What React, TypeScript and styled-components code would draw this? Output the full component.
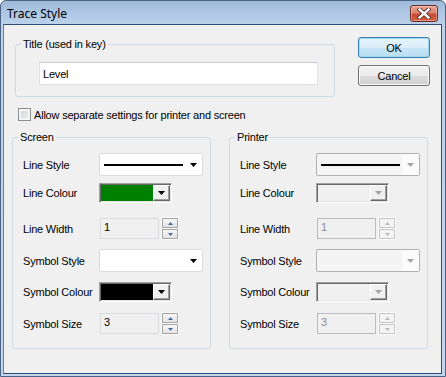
import React from 'react';
import styled, { createGlobalStyle } from 'styled-components';

const GlobalStyle = createGlobalStyle`
  html, body { margin: 0; padding: 0; }
  body {
    background: #ffffff;
    font-family: "Liberation Sans", Arial, sans-serif;
    font-size: 11px;
    color: #000;
  }
  *, *::before, *::after { box-sizing: border-box; }
`;

const Window = styled.div`
  width: 446px;
  height: 377px;
  display: flex;
  flex-direction: column;
  border: 1px solid #4a6387;
  border-radius: 6px 6px 0 0;
  padding: 0 3px 2px 2px;
  background: linear-gradient(180deg, #9fb9da 0px, #afc7e4 12px, #bcd2eb 24px, #c2d6ee 100%);
  overflow: hidden;
`;

const TitleBar = styled.div`
  height: 23px;
  flex: none;
  display: flex;
  align-items: flex-start;
  justify-content: space-between;
  padding: 0 4px 0 4px;
`;

const TitleText = styled.div`
  margin-top: 5px;
  line-height: 16px;
  font-family: "Noto Sans", "Open Sans", sans-serif;
  font-size: 12px;
  color: #000;
`;

const CloseButton = styled.div`
  margin-top: 4px;
  width: 28px;
  height: 17px;
  border: 1px solid #6a2a25;
  border-radius: 3px;
  background: linear-gradient(180deg, #e8a493 0%, #dc8672 45%, #c74a32 55%, #d0603f 100%);
  box-shadow: inset 0 0 0 1px rgba(255, 220, 210, 0.45);
  display: flex;
  align-items: center;
  justify-content: center;
`;

const Client = styled.div`
  flex: 1;
  background: #f0f0f0;
  border: 1px solid #2f4c74;
  border-left-color: #5f80ad;
  display: flex;
  flex-direction: column;
`;

const TopRow = styled.div`
  display: flex;
  align-items: flex-start;
  padding: 12px 0 0 11px;
`;

const GroupBox = styled.fieldset<{ $w: number; $h: number; $mt?: number }>`
  margin: ${p => p.$mt ?? 0}px 0 0 0;
  padding: 0;
  min-width: 0;
  width: ${p => p.$w}px;
  height: ${p => p.$h}px;
  border: 1px solid #d0dae0;
  border-radius: 3px;
`;

const Legend = styled.legend`
  margin-left: 5px;
  padding: 0 2px;
  font-size: 11px;
  line-height: 13px;
  letter-spacing: -0.2px;
`;

const GroupBody = styled.div<{ $pt: number; $pl: number }>`
  padding: ${p => p.$pt}px 0 0 ${p => p.$pl}px;
  display: flex;
  flex-direction: column;
`;

const TextBox = styled.div`
  width: 279px;
  height: 23px;
  background: #fff;
  border: 1px solid #e2e3ea;
  border-top-color: #c9ccd3;
  padding: 0 3px;
  display: flex;
  align-items: center;
  font-size: 11px;
  letter-spacing: -0.2px;
`;

const ButtonColumn = styled.div`
  margin-left: 23px;
  display: flex;
  flex-direction: column;
  gap: 7px;
`;

const PushButton = styled.div<{ $default?: boolean }>`
  width: 72px;
  height: 21px;
  border: 1px solid ${p => (p.$default ? '#3c7fb1' : '#707070')};
  border-radius: 3px;
  background: ${p =>
    p.$default
      ? 'linear-gradient(180deg, #e7f4fb 0%, #dbeef9 50%, #c6e5f6 51%, #b9def3 100%)'
      : 'linear-gradient(180deg, #f2f2f2 0%, #ebebeb 50%, #dddddd 51%, #cfcfcf 100%)'};
  box-shadow: inset 0 0 0 1px ${p => (p.$default ? '#9fd9f4' : '#fcfcfc')};
  display: flex;
  align-items: center;
  justify-content: center;
  font-size: 11px;
  letter-spacing: -0.2px;
`;

const CheckRow = styled.div`
  display: flex;
  align-items: center;
  height: 13px;
  margin-top: 11px;
  padding-left: 14px;
`;

const CheckBox = styled.div`
  width: 13px;
  height: 13px;
  border: 1px solid #8e8f8f;
  background: linear-gradient(135deg, #cbcfd5 0%, #f3f3f3 100%);
  box-shadow: inset 0 0 0 2px #f4f4f4;
`;

const CheckLabel = styled.span`
  margin-left: 3px;
  letter-spacing: -0.2px;
`;

const GroupsRow = styled.div`
  display: flex;
  gap: 18px;
  margin-top: 10px;
  padding-left: 8px;
`;

const FieldRow = styled.div<{ $h: number; $mt: number }>`
  display: flex;
  align-items: center;
  height: ${p => p.$h}px;
  margin-top: ${p => p.$mt}px;
`;

const FieldLabel = styled.div`
  width: 76px;
  flex: none;
  letter-spacing: -0.2px;
`;

const Combo = styled.div<{ $disabled?: boolean }>`
  width: 104px;
  height: 23px;
  border: 1px solid ${p => (p.$disabled ? '#adb2b5' : '#dadada')};
  border-radius: 2px;
  background: ${p => (p.$disabled ? '#f4f4f4' : '#ffffff')};
  display: flex;
  align-items: center;
  padding-left: 4px;
`;

const LineSample = styled.div`
  width: 79px;
  height: 2px;
  background: #000;
`;

const ComboArrowArea = styled.div<{ $disabled?: boolean }>`
  margin-left: auto;
  width: 17px;
  height: 100%;
  display: flex;
  align-items: center;
  justify-content: center;
  background: ${p => (p.$disabled ? '#fbfbfb' : 'transparent')};
`;

const ColourPicker = styled.div`
  width: 73px;
  height: 20px;
  border: 1px solid;
  border-color: #a0a0a0 #ffffff #ffffff #a0a0a0;
  box-shadow: inset 1px 1px 0 #696969, inset -1px -1px 0 #e3e3e3;
  padding: 1px;
  display: flex;
`;

const Swatch = styled.div<{ $color: string }>`
  flex: 1;
  background: ${p => p.$color};
`;

const DropButton = styled.div`
  width: 17px;
  border: 1px solid;
  border-color: #ffffff #696969 #696969 #ffffff;
  box-shadow: inset -1px -1px 0 #a0a0a0;
  background: #f0f0f0;
  display: flex;
  align-items: center;
  justify-content: center;
`;

const NumberBox = styled.div<{ $disabled?: boolean }>`
  width: 59px;
  height: 21px;
  margin-left: 1px;
  border: 1px solid ${p => (p.$disabled ? '#b9bcbf' : '#d9dbde')};
  background: #f0f0f0;
  padding: 1px 3px 0;
  line-height: 14px;
  color: ${p => (p.$disabled ? '#8a8a8a' : '#000')};
  align-self: flex-start;
`;

const Spin = styled.div`
  margin-left: 3px;
  display: flex;
  flex-direction: column;
  gap: 1px;
  align-self: flex-start;
`;

const SpinButton = styled.div<{ $disabled?: boolean }>`
  width: 16px;
  height: 10px;
  border: 1px solid ${p => (p.$disabled ? '#c6c6c6' : '#a5a5a5')};
  background: ${p => (p.$disabled ? '#f4f4f4' : 'linear-gradient(180deg, #f6f6f6 0%, #e3e3e3 100%)')};
  box-shadow: 0 0 0 1px #ffffff;
  display: flex;
  align-items: center;
  justify-content: center;
`;

const Triangle = ({ dir, color, w, h }: { dir: 'up' | 'down'; color: string; w: number; h: number }) => (
  <svg width={w} height={h} viewBox={`0 0 ${w} ${h}`} style={{ display: 'block' }}>
    <polygon
      points={dir === 'down' ? `0,0 ${w},0 ${w / 2},${h}` : `0,${h} ${w},${h} ${w / 2},0`}
      fill={color}
    />
  </svg>
);

const CloseGlyph = () => (
  <svg width="14" height="11" viewBox="0 0 14 11" style={{ display: 'block' }}>
    <path d="M2.5 1.5 L11.5 9.5 M11.5 1.5 L2.5 9.5" stroke="#5a2a26" strokeWidth="4.2" strokeLinecap="square" />
    <path d="M2.5 1.5 L11.5 9.5 M11.5 1.5 L2.5 9.5" stroke="#ffffff" strokeWidth="2.4" strokeLinecap="square" />
  </svg>
);

type Settings = {
  title: string;
  disabled?: boolean;
  lineColour: string;
  symbolColour: string;
  width: string;
  size: string;
};

const rows = { r1: [23, 0], r2: [20, 7], r3: [21, 15], r4: [23, 10], r5: [20, 10], r6: [21, 11] };

const StyleGroup = ({ s }: { s: Settings }) => {
  const d = s.disabled;
  const arrow = d ? '#a3a3a3' : '#000';
  const spinArrow = d ? '#b8b8b8' : '#4a6a9c';
  return (
    <GroupBox $w={199} $h={218}>
      <Legend>{s.title}</Legend>
      <GroupBody $pt={9} $pl={10}>
        <FieldRow $h={rows.r1[0]} $mt={rows.r1[1]}>
          <FieldLabel>Line Style</FieldLabel>
          <Combo $disabled={d}>
            <LineSample />
            <ComboArrowArea $disabled={d}>
              <Triangle dir="down" color={arrow} w={7} h={4} />
            </ComboArrowArea>
          </Combo>
        </FieldRow>
        <FieldRow $h={rows.r2[0]} $mt={rows.r2[1]}>
          <FieldLabel>Line Colour</FieldLabel>
          <ColourPicker>
            <Swatch $color={s.lineColour} />
            <DropButton>
              <Triangle dir="down" color={arrow} w={7} h={4} />
            </DropButton>
          </ColourPicker>
        </FieldRow>
        <FieldRow $h={rows.r3[0]} $mt={rows.r3[1]}>
          <FieldLabel>Line Width</FieldLabel>
          <NumberBox $disabled={d}>{s.width}</NumberBox>
          <Spin>
            <SpinButton $disabled={d}>
              <Triangle dir="up" color={spinArrow} w={5} h={3} />
            </SpinButton>
            <SpinButton $disabled={d}>
              <Triangle dir="down" color={spinArrow} w={5} h={3} />
            </SpinButton>
          </Spin>
        </FieldRow>
        <FieldRow $h={rows.r4[0]} $mt={rows.r4[1]}>
          <FieldLabel>Symbol Style</FieldLabel>
          <Combo $disabled={d}>
            <ComboArrowArea $disabled={d}>
              <Triangle dir="down" color={arrow} w={7} h={4} />
            </ComboArrowArea>
          </Combo>
        </FieldRow>
        <FieldRow $h={rows.r5[0]} $mt={rows.r5[1]}>
          <FieldLabel>Symbol Colour</FieldLabel>
          <ColourPicker>
            <Swatch $color={s.symbolColour} />
            <DropButton>
              <Triangle dir="down" color={arrow} w={7} h={4} />
            </DropButton>
          </ColourPicker>
        </FieldRow>
        <FieldRow $h={rows.r6[0]} $mt={rows.r6[1]}>
          <FieldLabel>Symbol Size</FieldLabel>
          <NumberBox $disabled={d}>{s.size}</NumberBox>
          <Spin>
            <SpinButton $disabled={d}>
              <Triangle dir="up" color={spinArrow} w={5} h={3} />
            </SpinButton>
            <SpinButton $disabled={d}>
              <Triangle dir="down" color={spinArrow} w={5} h={3} />
            </SpinButton>
          </Spin>
        </FieldRow>
      </GroupBody>
    </GroupBox>
  );
};

export default function App() {
  const screen: Settings = { title: 'Screen', lineColour: '#008000', symbolColour: '#000000', width: '1', size: '3' };
  const printer: Settings = {
    title: 'Printer',
    disabled: true,
    lineColour: '#f0f0f0',
    symbolColour: '#f0f0f0',
    width: '1',
    size: '3',
  };
  return (
    <>
      <GlobalStyle />
      <Window>
        <TitleBar>
          <TitleText>Trace Style</TitleText>
          <CloseButton>
            <CloseGlyph />
          </CloseButton>
        </TitleBar>
        <Client>
          <TopRow>
            <GroupBox $w={320} $h={59} $mt={1}>
              <Legend>Title (used in key)</Legend>
              <GroupBody $pt={11} $pl={23}>
                <TextBox>Level</TextBox>
              </GroupBody>
            </GroupBox>
            <ButtonColumn>
              <PushButton $default>OK</PushButton>
              <PushButton>Cancel</PushButton>
            </ButtonColumn>
          </TopRow>
          <CheckRow>
            <CheckBox />
            <CheckLabel>Allow separate settings for printer and screen</CheckLabel>
          </CheckRow>
          <GroupsRow>
            <StyleGroup s={screen} />
            <StyleGroup s={printer} />
          </GroupsRow>
        </Client>
      </Window>
    </>
  );
}
